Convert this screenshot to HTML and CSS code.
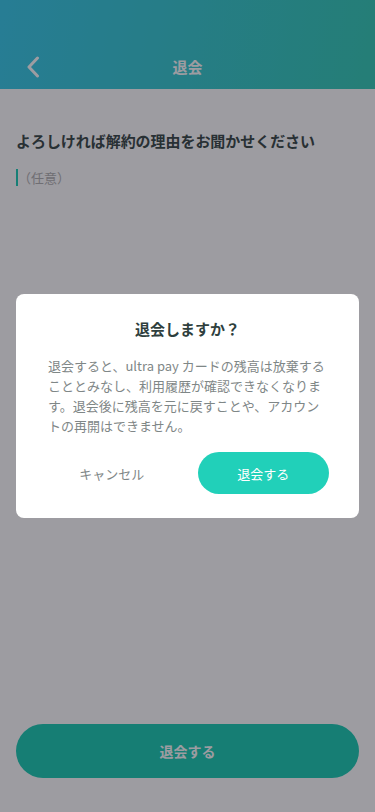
FILE: index.html
```html
<!DOCTYPE html>
<html lang="ja">
<head>
<meta charset="utf-8">
<meta name="viewport" content="width=device-width, initial-scale=1">
<title>退会</title>
<link rel="stylesheet" href="styles.css">
</head>
<body>
<div class="page">
  <header class="header">
    <div class="nav">
      <button class="back" aria-label="戻る">
        <svg width="14" height="22" viewBox="0 0 14 22" fill="none"><path d="M11.5 2 L3 11 L11.5 20" stroke="#ffffff" stroke-width="3" stroke-linecap="round" stroke-linejoin="round"/></svg>
      </button>
      <h1 class="nav-title">退会</h1>
      <span class="nav-spacer"></span>
    </div>
  </header>
  <main class="main">
    <h2 class="question">よろしければ解約の理由をお聞かせください</h2>
    <div class="optional">（任意）</div>
  </main>
  <footer class="footer">
    <button class="primary-btn">退会する</button>
  </footer>
</div>
<div class="overlay">
  <div class="modal">
    <h3 class="modal-title">退会しますか？</h3>
    <p class="modal-text">退会すると、ultra pay カードの残高は放棄することとみなし、利用履歴が確認できなくなります。退会後に残高を元に戻すことや、アカウントの再開はできません。</p>
    <div class="modal-actions">
      <button class="cancel-btn">キャンセル</button>
      <button class="confirm-btn">退会する</button>
    </div>
  </div>
</div>
</body>
</html>
```
FILE: styles.css
```css
* { box-sizing: border-box; }
html, body { margin: 0; padding: 0; }
body {
  width: 375px;
  height: 812px;
  overflow: hidden;
  position: relative;
  font-family: "Noto Sans CJK JP", "Noto Sans", sans-serif;
  background: #ffffff;
}
button {
  font-family: inherit;
  border: none;
  background: none;
  padding: 0;
  cursor: pointer;
}
.page {
  height: 812px;
  display: flex;
  flex-direction: column;
}
.header {
  height: 89px;
  background: linear-gradient(100deg, #3bcbea 0%, #37cdb8 100%);
  padding-top: 44px;
}
.nav {
  height: 45px;
  display: flex;
  align-items: center;
  justify-content: space-between;
  padding: 0 26px;
}
.back {
  width: 40px;
  height: 30px;
  display: flex;
  align-items: center;
}
.nav-spacer { width: 40px; }
.nav-title {
  margin: 0;
  font-size: 15px;
  font-weight: 700;
  color: #ffffff;
  line-height: 24px;
}
.main {
  flex: 1;
  padding: 40px 16px 0;
}
.question {
  margin: 0;
  font-size: 15px;
  font-weight: 700;
  line-height: 24px;
  color: #3c4c4a;
  letter-spacing: -0.05px;
}
.optional {
  margin-top: 16px;
  border-left: 2px solid #20cfb7;
  height: 17px;
  display: flex;
  align-items: center;
  font-size: 13px;
  color: #b3b3b3;
}
.footer {
  padding: 0 16px 34px;
}
.primary-btn {
  width: 100%;
  height: 54px;
  border-radius: 27px;
  background: #1ecdb4;
  color: #ffffff;
  font-size: 14px;
  font-weight: 700;
}
.overlay {
  position: absolute;
  inset: 0;
  background: rgba(10, 8, 20, 0.4);
  display: flex;
  align-items: center;
  justify-content: center;
}
.modal {
  width: 343px;
  background: #ffffff;
  border-radius: 8px;
  padding: 23px 30px 24px;
}
.modal-title {
  margin: 0;
  text-align: center;
  font-size: 15px;
  font-weight: 700;
  line-height: 24px;
  color: #2f3f3d;
}
.modal-text {
  margin: 15px 2px 16px;
  font-size: 13px;
  line-height: 20px;
  color: #7f8787;
}
.modal-actions {
  display: grid;
  grid-template-columns: 1fr 1fr;
  gap: 20px;
}
.cancel-btn {
  height: 42px;
  font-size: 13px;
  color: #7f8787;
}
.confirm-btn {
  height: 42px;
  border-radius: 21px;
  background: #21d0b9;
  color: #ffffff;
  font-size: 13px;
}
```
